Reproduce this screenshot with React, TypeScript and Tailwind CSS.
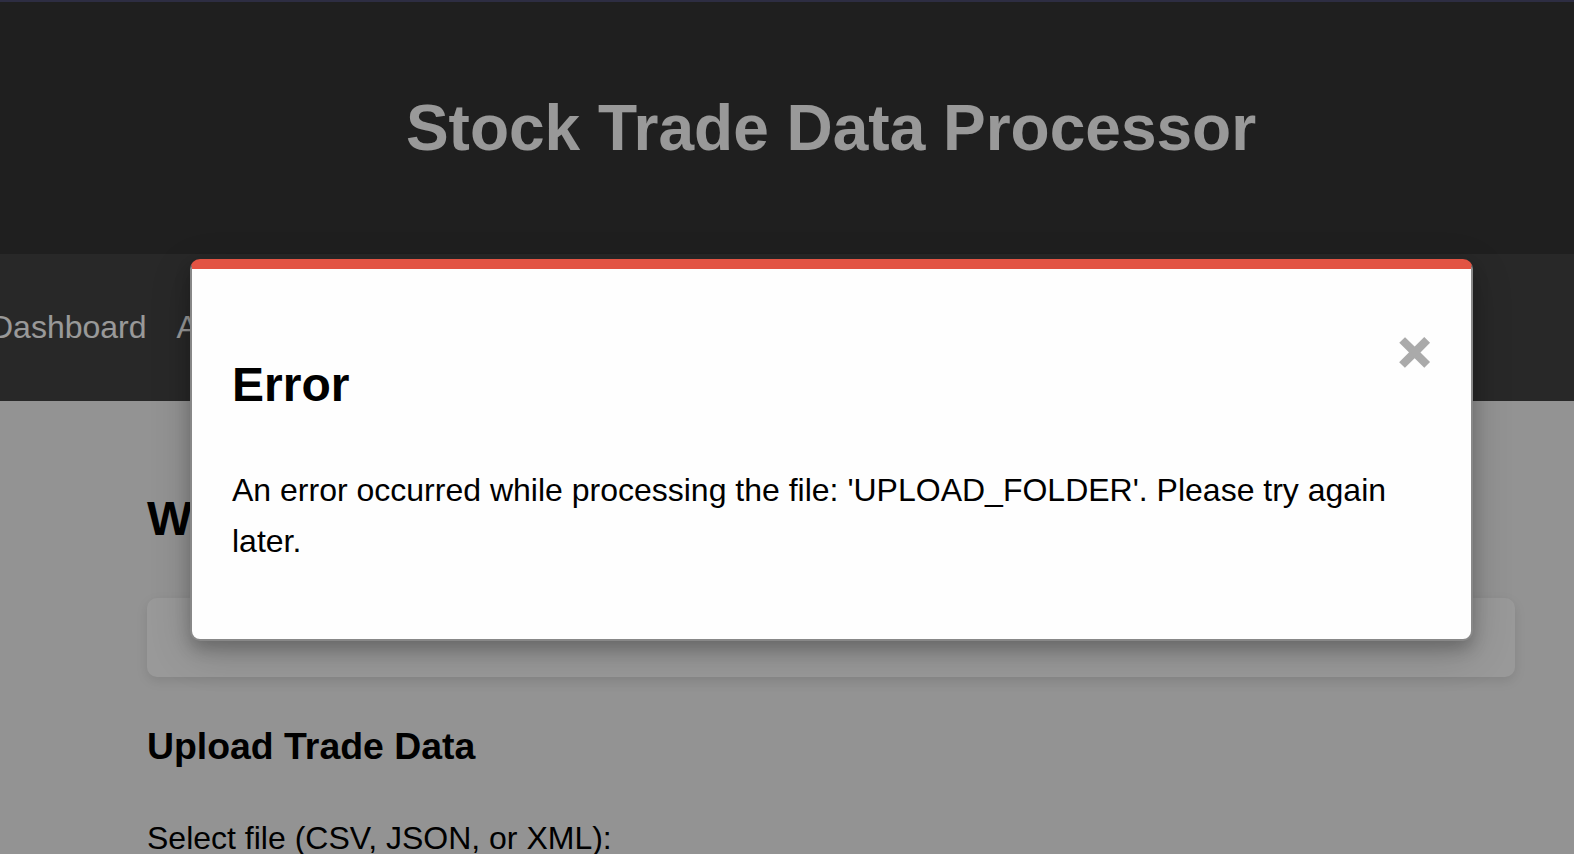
import React from "react";

export default function App() {
  return (
    <div className="relative h-[854px] w-[1574px] overflow-hidden bg-[#f5f5f5] font-['Liberation_Sans',Arial,sans-serif] leading-[1.6] text-black">
      <div className="h-[2px] bg-[#4b4b6e]" />
      <header className="flex h-[252px] items-center justify-center bg-[#353535] pl-[88px]">
        <h1 className="text-[64px] font-bold leading-[1.6] text-white">Stock Trade Data Processor</h1>
      </header>
      <nav className="flex h-[147px] items-start gap-[30px] bg-[#444444] pl-0 pt-[48px] text-[32px] leading-[1.6] text-white">
        <span className="-ml-[10px]">Dashboard</span>
        <span>Analytics</span>
        <span>Reports</span>
        <span>Settings</span>
      </nav>
      <main className="pl-[147px] pr-[59px] pt-[80px]">
        <h2 className="text-[48px] font-bold leading-[1.6]">Welcome to the Trade Data Processor</h2>
        <div className="mt-[40px] h-[79px] rounded-[10px] bg-white shadow-[0_4px_12px_rgba(0,0,0,0.1)]" />
        <h3 className="mt-[40px] text-[37.4px] font-bold leading-[1.6]">Upload Trade Data</h3>
        <p className="mt-[36px] text-[32px] leading-[1.6]">Select file (CSV, JSON, or XML):</p>
      </main>

      <div className="absolute inset-0 bg-black/40" />

      <div className="absolute left-[190px] top-[259px] w-[1283px] rounded-[10px] border-2 border-t-[10px] border-[#888888] border-t-[#e25343] bg-[#fefefe] px-[40px] pb-[40px] pt-[40px] shadow-[0_8px_16px_rgba(0,0,0,0.2),0_12px_40px_rgba(0,0,0,0.19)]">
        <span className="float-right -mt-[2px] text-[56px] font-bold leading-[1.6] text-[#aaaaaa] [-webkit-text-stroke:2px_#aaaaaa]">×</span>
        <h2 className="mt-[38px] text-[48px] font-bold leading-[1.6]">Error</h2>
        <p className="mb-[32px] mt-[41px] text-[32px] leading-[1.6]">
          An error occurred while processing the file: 'UPLOAD_FOLDER'. Please try again later.
        </p>
      </div>
    </div>
  );
}
